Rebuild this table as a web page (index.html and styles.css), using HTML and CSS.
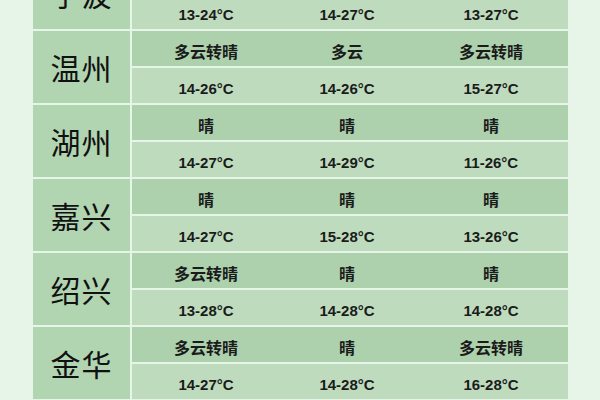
FILE: index.html
```html
<!DOCTYPE html>
<html lang="zh">
<head>
<meta charset="utf-8">
<link rel="stylesheet" href="styles.css">
</head>
<body>
<div class="table">
  <div class="block">
    <div class="city">宁波</div>
    <div class="data">
      <div class="row weather"><span>多云</span><span>晴</span><span>多云</span></div>
      <div class="row temp"><span>13-24°C</span><span>14-27°C</span><span>13-27°C</span></div>
    </div>
  </div>
  <div class="block">
    <div class="city">温州</div>
    <div class="data">
      <div class="row weather"><span>多云转晴</span><span>多云</span><span>多云转晴</span></div>
      <div class="row temp"><span>14-26°C</span><span>14-26°C</span><span>15-27°C</span></div>
    </div>
  </div>
  <div class="block">
    <div class="city">湖州</div>
    <div class="data">
      <div class="row weather"><span>晴</span><span>晴</span><span>晴</span></div>
      <div class="row temp"><span>14-27°C</span><span>14-29°C</span><span>11-26°C</span></div>
    </div>
  </div>
  <div class="block">
    <div class="city">嘉兴</div>
    <div class="data">
      <div class="row weather"><span>晴</span><span>晴</span><span>晴</span></div>
      <div class="row temp"><span>14-27°C</span><span>15-28°C</span><span>13-26°C</span></div>
    </div>
  </div>
  <div class="block">
    <div class="city">绍兴</div>
    <div class="data">
      <div class="row weather"><span>多云转晴</span><span>晴</span><span>晴</span></div>
      <div class="row temp"><span>13-28°C</span><span>14-28°C</span><span>14-28°C</span></div>
    </div>
  </div>
  <div class="block">
    <div class="city">金华</div>
    <div class="data">
      <div class="row weather"><span>多云转晴</span><span>晴</span><span>多云转晴</span></div>
      <div class="row temp"><span>14-27°C</span><span>14-28°C</span><span>16-28°C</span></div>
    </div>
  </div>
</div>
</body>
</html>
```
FILE: styles.css
```css
html, body {
  margin: 0;
  padding: 0;
  width: 600px;
  height: 400px;
  overflow: hidden;
  background: #e7f5e9;
  font-family: "Liberation Sans", Arial, "Noto Sans CJK SC", sans-serif;
  color: #1b1b1b;
}
.table {
  display: flex;
  flex-direction: column;
  gap: 2px;
  margin: -43px 0 0 33px;
  width: 535px;
}
.block {
  display: grid;
  grid-template-columns: 97px 436px;
  column-gap: 2px;
  height: 72px;
}
.city {
  background: #b1d4b1;
  display: flex;
  align-items: center;
  justify-content: center;
  font-family: "Noto Sans CJK SC", sans-serif;
  font-size: 30px;
  letter-spacing: 1px;
  color: #111;
}
.data {
  display: flex;
  flex-direction: column;
  gap: 2px;
}
.row {
  height: 35px;
  display: grid;
  grid-template-columns: 148px 134px 154px;
  align-items: center;
  box-sizing: border-box;
  padding-top: 5px;
}
.row span {
  text-align: center;
  font-weight: bold;
  font-size: 15px;
}
.weather {
  background: #acd1ac;
}
.weather span {
  font-family: "Noto Sans CJK SC", sans-serif;
  font-size: 16px;
  font-weight: bold;
}
.temp {
  background: #bedbbe;
}
```
